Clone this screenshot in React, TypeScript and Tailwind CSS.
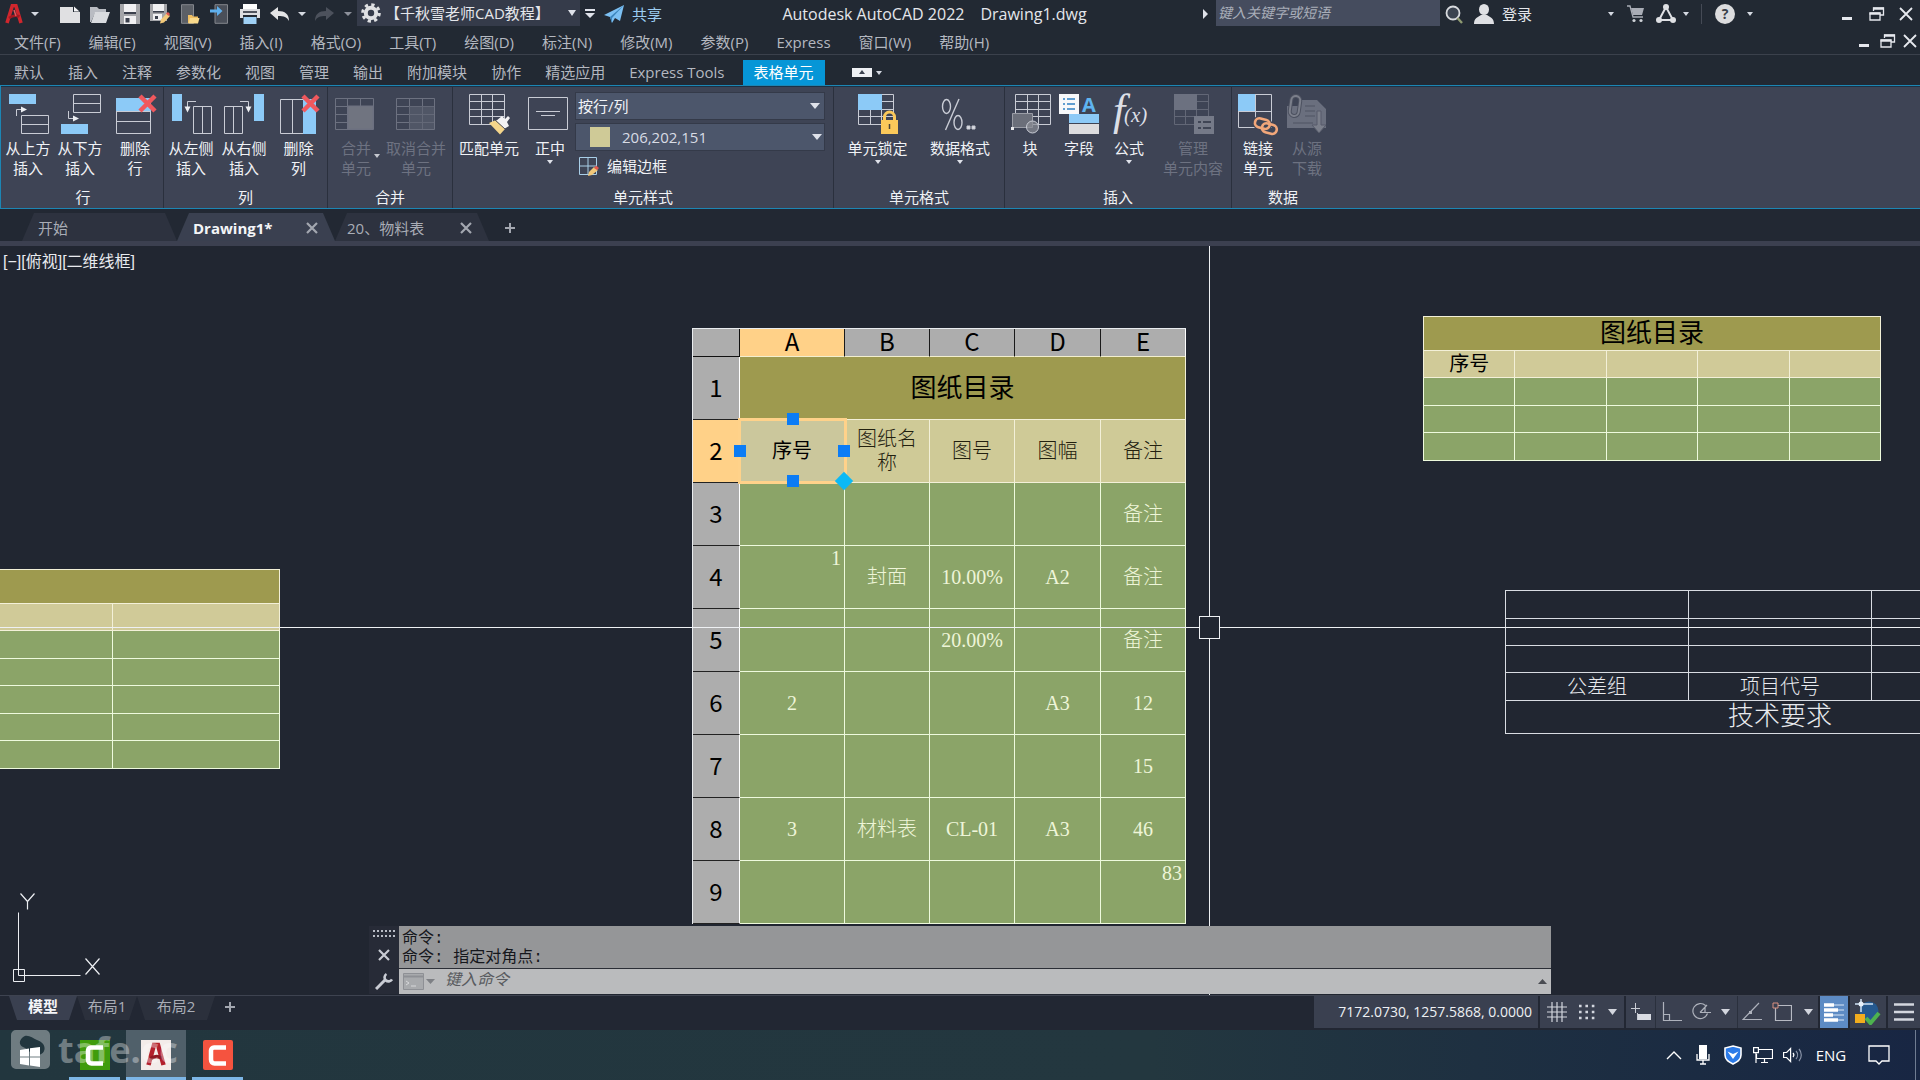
import React from 'react';

const UI_FONT = "font-['Open_Sans','Noto_Sans_CJK_SC',sans-serif]";
const CAD_FONT = "font-['Liberation_Serif','Noto_Sans_CJK_SC',serif]";
const HEAD_FONT = "font-['Noto_Sans_CJK_SC',sans-serif]";

/* ---------- small helpers ---------- */

const Caret: React.FC<{ className?: string }> = ({ className = 'w-2 h-1 text-[#d5d9e2]' }) => (
  <svg viewBox="0 0 10 5" preserveAspectRatio="none" className={`shrink-0 ${className}`} fill="currentColor">
    <path d="M0 0h10L5 5z" />
  </svg>
);

interface IconButtonProps {
  label: string;
  className?: string;
  children: React.ReactNode;
}

const IconButton: React.FC<IconButtonProps> = ({ label, className = 'w-[30px]', children }) => (
  <button type="button" aria-label={label} className={`h-full flex items-center justify-center shrink-0 ${className}`}>
    {children}
  </button>
);

const Svg20: React.FC<{ children: React.ReactNode }> = ({ children }) => (
  <svg viewBox="0 0 20 20" className="w-5 h-5 shrink-0" fill="none">
    {children}
  </svg>
);

/* ---------- title bar ---------- */

const RestoreIcon = () => (
  <svg viewBox="0 0 16 14" className="w-4 h-[14px]" fill="none" stroke="#e6e8ee" strokeWidth="1.3">
    <path d="M4.5 4V1h10v7h-3M1 6h10v7H1z" />
    <path d="M4 1.6h11M.5 6.6h11" strokeWidth="2.4" />
  </svg>
);

const CloseIcon = () => (
  <svg viewBox="0 0 14 14" className="w-[14px] h-[14px]" stroke="#e6e8ee" strokeWidth="1.8">
    <path d="M1 1l12 12M13 1L1 13" />
  </svg>
);

const MinimizeIcon = () => (
  <svg viewBox="0 0 10 14" className="w-[10px] h-[14px]" fill="#e6e8ee">
    <path d="M0 10h10v3H0z" />
  </svg>
);

const TitleBar = () => (
  <header className="h-[27px] flex items-center bg-[#222933] text-[#e4e6eb] text-[15px] leading-5 whitespace-nowrap">
    <IconButton label="应用程序菜单" className="w-[43px] gap-2">
      <svg viewBox="0 0 18 20" className="w-[18px] h-5" fill="none">
        <path d="M2 19L7.4 1.5h3.4L16 19" stroke="#d0262d" strokeWidth="3.6" />
        <path d="M4 14c4-3 7-3 10.5-1.500" stroke="#a11a22" strokeWidth="2.600" />
        <path d="M9 6l2 6" stroke="#e8555a" strokeWidth="1.500" />
      </svg>
      <Caret />
    </IconButton>
    <div className="w-3" />
    <IconButton label="新建">
      <Svg20>
        <path d="M0 3h13v5h7v11H0z" fill="#e0e0e2" />
        <path d="M14 2.500l5.500 5H14z" fill="#f5f5f6" />
      </Svg20>
    </IconButton>
    <IconButton label="打开">
      <Svg20>
        <path d="M0 3h7l2 2h7v4H5L1 18H0z" fill="#b9bcc3" />
        <path d="M5 8h15l-4 11H1z" fill="#d9dbdf" />
      </Svg20>
    </IconButton>
    <IconButton label="保存">
      <Svg20>
        <path d="M0 0h20v20H0z" fill="#a4a5a9" />
        <path d="M4 0h12v8H4zM4 12h12v8H4z" fill="#f0f0f2" />
        <path d="M4 8h12v2H4z" fill="#3a3f4c" />
        <path d="M5.500 14h4v4.500h-4z" fill="#3a3f4c" />
      </Svg20>
    </IconButton>
    <IconButton label="另存为">
      <Svg20>
        <path d="M0 0h17v17H0z" fill="#a4a5a9" />
        <path d="M3 0h11v7H3zM3 10h9v6H3z" fill="#f0f0f2" />
        <path d="M3 7h11v1.500H3zM5 12h3v3H5z" fill="#3a3f4c" />
        <path d="M10 19.500l1-4 6-6.500 3 3-6 6.500z" fill="#f2c879" />
        <path d="M16 9.500l2-1.500 2 2-1.500 2z" fill="#e0574f" />
      </Svg20>
    </IconButton>
    <IconButton label="从 Web 打开">
      <Svg20>
        <path d="M1.500.7h12v18.600h-12z" fill="#5b5f66" stroke="#83868c" />
        <path d="M8 19V11h4l1 1.500h5V19z" fill="#f0bf62" />
        <path d="M10 14h9.500L18 19.500H8.500z" fill="#f9d98b" />
      </Svg20>
    </IconButton>
    <IconButton label="保存到 Web">
      <Svg20>
        <path d="M5 .7h12.500v18.600H5z" fill="#4a4f59" stroke="#83868c" />
        <path d="M0 5.500h7V2l5.500 5L7 12V8.500H0z" fill="#5fb0ee" />
      </Svg20>
    </IconButton>
    <IconButton label="打印">
      <Svg20>
        <path d="M3 0h14v6H3z" fill="#fff" />
        <path d="M0 5h20v9h-3v-3H3v3H0z" fill="#dcdde0" />
        <path d="M3 7h14v2H3z" fill="#50545e" />
        <path d="M3.500 13h13v7h-13z" fill="#9fd0f5" />
      </Svg20>
    </IconButton>
    <IconButton label="放弃">
      <Svg20>
        <path d="M0 9l8-6v4c7 0 11 3 11 10-2-4-5-5-11-5v4z" fill="#e4e4e6" />
      </Svg20>
    </IconButton>
    <IconButton label="放弃列表" className="w-[14px]"><Caret /></IconButton>
    <IconButton label="重做">
      <Svg20>
        <path d="M20 9l-8-6v4C5 7 1 10 1 17c2-4 5-5 11-5v4z" fill="#4c515c" />
      </Svg20>
    </IconButton>
    <IconButton label="重做列表" className="w-[18px]"><Caret className="w-2 h-1 text-[#8d919b]" /></IconButton>
    <div className="w-[223px] h-[26px] self-start bg-[#353b4a] flex items-center justify-between px-1">
      <div className="flex items-center gap-1">
        <Svg20>
          <circle cx="10" cy="10" r="5.200" stroke="#dfe0e3" strokeWidth="4" />
          <circle cx="10" cy="10" r="8.300" stroke="#dfe0e3" strokeWidth="3" strokeDasharray="3.260 3.260" />
        </Svg20>
        <span>【千秋雪老师CAD教程】</span>
      </div>
      <Caret className="w-2 h-[6px] text-[#dfe2ea]" />
    </div>
    <IconButton label="自定义快速访问工具栏" className="w-5">
      <svg viewBox="0 0 10 10" className="w-[10px] h-[10px]" fill="#dfe2ea">
        <path d="M0 0h10v2H0zM0 4h10L5 9z" />
      </svg>
    </IconButton>
    <button type="button" className="flex items-center gap-2 ml-1 text-[#9ccdf2]">
      <Svg20>
        <path d="M0 11L20 1l-4 16-5-3-3 5-2-6z" fill="#7cc0f3" />
        <path d="M6 13L20 1 8 14v5z" fill="#3d86bd" />
      </Svg20>
      共享
    </button>

    <div className="flex-1 flex justify-center gap-4 pl-1 text-base">
      <span>Autodesk AutoCAD 2022</span>
      <span>Drawing1.dwg</span>
    </div>

    <svg viewBox="0 0 5 10" className="w-[5px] h-[10px] mr-2" fill="#dfe2ea"><path d="M0 0l5 5-5 5z" /></svg>
    <input
      aria-label="搜索"
      placeholder="键入关键字或短语"
      className="w-56 h-[26px] self-start bg-[#454c5e] px-[2px] pb-[2px] text-sm italic placeholder:text-[#a9aeb9] outline-none"
    />
    <IconButton label="搜索" className="w-7">
      <Svg20>
        <circle cx="9" cy="9" r="6.500" fill="#3b4350" stroke="#d8dade" strokeWidth="1.800" />
        <path d="M13.500 14l4.500 5" stroke="#8f9a72" strokeWidth="2.400" />
      </Svg20>
    </IconButton>
    <button type="button" className="flex items-center gap-2 pl-[6px] w-[131px]">
      <Svg20>
        <ellipse cx="10" cy="5.500" rx="5" ry="5.500" fill="#dfe0e4" />
        <path d="M0 20c0-6 4-7 7-9h6c3 2 7 3 7 9z" fill="#dfe0e4" />
      </Svg20>
      登录
    </button>
    <IconButton label="登录选项" className="w-6"><Caret className="w-[6px] h-1 text-[#d5d9e2]" /></IconButton>
    <IconButton label="应用商店" className="w-[26px]">
      <svg viewBox="0 0 18 18" className="w-[18px] h-[18px]" fill="none">
        <path d="M0 1h3l3 11h10" stroke="#a9adb6" strokeWidth="1.300" />
        <path d="M4 3h13l-2 7H6z" fill="#a9adb6" />
        <circle cx="7" cy="15.500" r="1.600" fill="#cfd2d8" />
        <circle cx="14" cy="15.500" r="1.600" fill="#cfd2d8" />
      </svg>
    </IconButton>
    <IconButton label="Autodesk 应用" className="w-[34px]">
      <Svg20>
        <path d="M10 3L3 16h14z" stroke="#dfe0e4" strokeWidth="2" />
        <circle cx="10" cy="3" r="3" fill="#dfe0e4" />
        <circle cx="3" cy="16" r="3" fill="#dfe0e4" />
        <circle cx="17" cy="16" r="3" fill="#dfe0e4" />
      </Svg20>
    </IconButton>
    <Caret className="w-[6px] h-1 text-[#d5d9e2]" />
    <div className="w-px h-5 bg-[#454a55] ml-3 mr-2" />
    <IconButton label="帮助">
      <span className="w-5 h-5 rounded-full bg-[#dcdcde] text-[#3a3f49] font-bold flex items-center justify-center text-sm">?</span>
    </IconButton>
    <IconButton label="帮助选项" className="w-5"><Caret className="w-[6px] h-1 text-[#d5d9e2]" /></IconButton>
    <div className="h-full flex items-center pl-[72px]">
      <IconButton label="最小化"><MinimizeIcon /></IconButton>
      <IconButton label="还原"><RestoreIcon /></IconButton>
      <IconButton label="关闭" className="w-7"><CloseIcon /></IconButton>
    </div>
  </header>
);

/* ---------- menu bar and ribbon tabs ---------- */

const MENUS = [
  '文件(F)', '编辑(E)', '视图(V)', '插入(I)', '格式(O)', '工具(T)', '绘图(D)',
  '标注(N)', '修改(M)', '参数(P)', 'Express', '窗口(W)', '帮助(H)',
];

const MenuBar = () => (
  <nav className="h-7 flex items-center justify-between border-b border-[#3b414c] bg-[#222933] text-[15px] leading-5 text-[#b4b8c0] whitespace-nowrap">
    <div className="flex gap-7 pl-[14px] pt-[2px]">
      {MENUS.map((m) => (
        <button type="button" key={m}>{m}</button>
      ))}
    </div>
    <div className="flex items-center">
      <IconButton label="最小化图形" className="w-6"><MinimizeIcon /></IconButton>
      <IconButton label="还原图形" className="w-6"><RestoreIcon /></IconButton>
      <IconButton label="关闭图形" className="w-5"><CloseIcon /></IconButton>
    </div>
  </nav>
);

const TABS = [
  '默认', '插入', '注释', '参数化', '视图', '管理', '输出', '附加模块', '协作', '精选应用', 'Express Tools',
];

const RibbonTabs = () => (
  <nav className="h-[30px] flex items-end pl-[2px] bg-[#222933] text-[15px] leading-5 text-[#b4b8c0] whitespace-nowrap">
    {TABS.map((t) => (
      <button type="button" key={t} className="h-[25px] px-3 pb-[2px]">{t}</button>
    ))}
    <button type="button" className="h-[25px] ml-[6px] px-[11px] pb-[2px] bg-[#0696d7] text-white">表格单元</button>
    <button type="button" aria-label="最小化功能区" className="h-[25px] ml-[27px] flex items-center gap-1">
      <svg viewBox="0 0 20 9" className="w-5 h-[9px]"><path d="M0 0h20v9H0z" fill="#eef0f4" /><path d="M7 6h6l-3-4z" fill="#3c4250" /></svg>
      <Caret className="w-[6px] h-1 text-[#d5d9e2]" />
    </button>
  </nav>
);

/* ---------- ribbon icons, all on a 44 x 40 box ---------- */

const Ico: React.FC<{ children: React.ReactNode }> = ({ children }) => (
  <svg viewBox="0 0 44 40" className="w-11 h-10 overflow-visible" fill="none" stroke="#c9ccd5" strokeWidth="1">
    {children}
  </svg>
);

const RedCross: React.FC<{ x: number }> = ({ x }) => (
  <path d={`M${x} 2l15 15M${x + 15} 2l-15 15`} stroke="#f0585d" strokeWidth="4.500" />
);

const Arrow: React.FC<{ line: string; head: string }> = ({ line, head }) => (
  <>
    <path d={line} />
    <path d={head} fill="#eceef2" stroke="none" />
  </>
);

const RowAboveIcon = () => (
  <Ico>
    <path d="M3 0h27v10H3z" fill="#8ccaf7" stroke="none" />
    <Arrow line="M10.500 22v-6.500h6" head="M15 12.500l6 3-6 3z" />
    <path d="M15.500 21.500h27v18h-27zM15.500 30.500h27" />
  </Ico>
);

const RowBelowIcon = () => (
  <Ico>
    <path d="M15.500.5h27v18h-27zM15.500 9.500h27" />
    <Arrow line="M10.500 17v7.500h6" head="M15 21.500l6 3-6 3z" />
    <path d="M3 30h27v10H3z" fill="#8ccaf7" stroke="none" />
  </Ico>
);

const RowDeleteIcon = () => (
  <Ico>
    <path d="M3 4h35v13H3z" fill="#8ccaf7" stroke="none" />
    <path d="M3.500 17v22.500h34V17M3.500 27.500h34M3 17.500h34" />
    <RedCross x={27} />
  </Ico>
);

const ColLeftIcon = () => (
  <Ico>
    <path d="M3 0h10v27H3z" fill="#8ccaf7" stroke="none" />
    <Arrow line="M27 7.500h-8.500v6" head="M15.500 12.500h6l-3 6z" />
    <path d="M24.500 12.500h18v27h-18zM33.500 12.500v27" />
  </Ico>
);

const ColRightIcon = () => (
  <Ico>
    <path d="M2.500 12.500h18v27h-18zM11.500 12.500v27" />
    <Arrow line="M18 7.500h8.500v6" head="M23.500 12.500h6l-3 6z" />
    <path d="M32 0h10v27H32z" fill="#8ccaf7" stroke="none" />
  </Ico>
);

const ColDeleteIcon = () => (
  <Ico>
    <path d="M26 5h13v35H26z" fill="#8ccaf7" stroke="none" />
    <path d="M26 5.500H3.500v34H26M15.500 5.500v34" />
    <RedCross x={26} />
  </Ico>
);

const MergeIcon = () => (
  <Ico>
    <g stroke="#6c7180">
      <path d="M1.500 4.500h38v31h-38zM13.500 4.500v31M26.500 4.500v8M1.500 12.500h12M1.500 20.500h12M1.500 28.500h12" />
      <path d="M14 12h25v23H14z" fill="#707480" />
    </g>
  </Ico>
);

const UnmergeIcon = () => (
  <Ico>
    <path d="M2.500 4.500h38v31h-38zM15.500 4.500v31M28.500 4.500v31M2.500 12.500h38M2.500 20.500h38M2.500 28.500h38" stroke="#6c7180" />
    <path d="M15 12h25v23H15z" fill="#5d6271" fillOpacity=".6" stroke="none" />
  </Ico>
);

const MatchIcon = () => (
  <Ico>
    <path d="M2.500.5h35v30h-35zM14.500.5v30M25.500.5v30M2.500 7.500h35M2.500 15.500h35M2.500 22.500h35" />
    <path d="M29 27l6-5 3 3 3-3 2 2-3 4 2 4-5 3z" fill="#f3f3f5" stroke="none" />
    <path d="M22 29l7-3 9 9-5 5.500z" fill="#f5d68b" stroke="none" />
    <path d="M28 26l10 9" stroke="#4a4f60" />
  </Ico>
);

const AlignIcon = () => (
  <Ico>
    <path d="M.5 3.500h39v32H.5zM8 17.500h24M13 21.500h14" />
  </Ico>
);

const LockIcon = () => (
  <Ico>
    <path d="M2.500.5h35v30h-35zM14.500 15v15M25.500.5v30M2.500 15.500h35M2.500 22.500h35M25.500 7.500h12" />
    <path d="M2 0h24v16H2z" fill="#8ccaf7" stroke="none" />
    <path d="M28.500 28v-5a5 5 0 0 1 10 0v5" stroke="#fbc95a" strokeWidth="3" />
    <path d="M25 26h17v14H25z" fill="#fbc95a" stroke="none" />
    <path d="M33.500 30v5" stroke="#4a4335" strokeWidth="1.500" />
  </Ico>
);

const FormatIcon = () => (
  <Ico>
    <g strokeWidth="1.400">
      <ellipse cx="8.500" cy="12.500" rx="4" ry="7" />
      <ellipse cx="20" cy="28.500" rx="4" ry="7" />
      <path d="M21 5L7.500 36" />
    </g>
    <path d="M29 32h3v3h-3zM34 32h3v3h-3z" fill="#d9dbe1" />
  </Ico>
);

const BlockIcon = () => (
  <Ico>
    <path d="M7.500.5h35v30h-35zM19.500.5v30M30.500.5v30M7.500 7.500h35M7.500 15.500h35M7.500 22.500h35" />
    <path d="M4.500 19.500h20v14h-20z" fill="#6b6f7a" stroke="#9a9da6" />
    <circle cx="24.500" cy="33" r="6" fill="#8a8d96" fillOpacity=".7" />
    <path d="M3 33h3v3H3z" fill="#e8e9ec" stroke="none" />
  </Ico>
);

const FieldIcon = () => (
  <Ico>
    <path d="M2 0h20v20H2z" fill="#f7f8fa" stroke="none" />
    <path d="M6 5h2M6 10h2M6 15h2M10 5h8M10 10h8M10 15h8" stroke="#2f80c3" strokeWidth="1.400" />
    <text x="25" y="18" fill="#5fb4f0" stroke="none" fontSize="20" fontWeight="700" fontFamily="Open Sans, sans-serif">A</text>
    <path d="M12 20h30v9H12z" fill="#8ccaf7" stroke="none" />
    <path d="M12 30h30v10H12z" fill="#dcdcde" stroke="none" />
  </Ico>
);

const FormulaIcon = () => (
  <Ico>
    <g fill="#dcdfe6" stroke="none" fontFamily="Liberation Serif, serif" fontStyle="italic">
      <text x="6" y="31" fontSize="44">f</text>
      <text x="17" y="28" fontSize="21">(x)</text>
    </g>
  </Ico>
);

const ManageIcon = () => (
  <Ico>
    <path d="M3.500.5h34v30h-34zM14.500 15v15M25.500.5v30M3.500 15.500h34M3.500 22.500h34M26 7.500h12" stroke="#626776" />
    <path d="M3 0h23v16H3z" fill="#6c7180" stroke="none" />
    <path d="M23 22h20v18H23z" fill="#757a88" stroke="none" />
    <path d="M27 28h3M27 34h3M32 28h8M32 34h8" stroke="#3f4555" strokeWidth="2" />
  </Ico>
);

const LinkIcon = () => (
  <Ico>
    <path d="M2.500.5h33v33h-33zM19.500.5v33M2.500 17.500h33" />
    <path d="M2 0h17v17H2z" fill="#8ccaf7" stroke="none" />
    <g stroke="#3f4555" strokeWidth="5">
      <rect x="19" y="25" width="15" height="9" rx="4.500" transform="rotate(15 26 29)" />
      <rect x="26" y="30" width="15" height="9" rx="4.500" transform="rotate(15 33 34)" />
    </g>
    <g stroke="#f2a77a" strokeWidth="2.600">
      <rect x="19" y="25" width="15" height="9" rx="4.500" transform="rotate(15 26 29)" />
      <rect x="26" y="30" width="15" height="9" rx="4.500" transform="rotate(15 33 34)" />
    </g>
  </Ico>
);

const DownloadIcon = () => (
  <Ico>
    <path d="M2 12h14V6h16l9 9v19H2z" fill="#6a6f7e" stroke="none" />
    <path d="M20 12h10M20 17h10M20 22h10M8 29h20" stroke="#585d6c" strokeWidth="1.500" />
    <rect x="5.500" y="2" width="9" height="20" rx="4.500" stroke="#4c5160" strokeWidth="4" transform="rotate(8 10 12)" />
    <rect x="5.500" y="2" width="9" height="20" rx="4.500" stroke="#7b7f8b" strokeWidth="2" transform="rotate(8 10 12)" />
    <path d="M32 17h4v14h5l-7 8-7-8h5z" fill="#7b7f8b" stroke="#565b6a" />
  </Ico>
);

/* ---------- ribbon ---------- */

interface ToolProps {
  icon: React.ReactNode;
  lines: string[];
  width: string;
  caret?: boolean;
  sideCaret?: boolean;
  disabled?: boolean;
}

const Tool: React.FC<ToolProps> = ({ icon, lines, width, caret, sideCaret, disabled }) => (
  <button
    type="button"
    disabled={disabled}
    className={`relative flex flex-col items-center shrink-0 pt-2 ${width} ${disabled ? 'text-[#6d7281]' : 'text-[#f0f2f6]'}`}
  >
    {icon}
    <span className="mt-1 flex flex-col items-center whitespace-nowrap">
      {lines.map((l) => (
        <span key={l}>{l}</span>
      ))}
    </span>
    {caret && <Caret className="w-[6px] h-1 mt-[2px] text-[#dfe2ea]" />}
    {sideCaret && <Caret className="absolute right-1 bottom-5 w-[6px] h-1 text-[#c5c8d0]" />}
  </button>
);

const Panel: React.FC<{ title: string; children: React.ReactNode }> = ({ title, children }) => (
  <section className="flex flex-col border-r border-[#2a303d]">
    <div className="h-[101px] flex items-start">{children}</div>
    <h2 className="h-5 text-center">{title}</h2>
  </section>
);

const Ribbon = () => (
  <div className="h-[124px] flex border-y border-l border-[#1c86b4] bg-[#3e4455] text-[15px] leading-5 text-[#f0f2f6] pl-[2px] shadow-[inset_0_1px_0_#1c3246]">
    <Panel title="行">
      <Tool icon={<RowAboveIcon />} lines={['从上方', '插入']} width="w-[50px]" />
      <Tool icon={<RowBelowIcon />} lines={['从下方', '插入']} width="w-[54px]" />
      <Tool icon={<RowDeleteIcon />} lines={['删除', '行']} width="w-[56px]" />
    </Panel>
    <Panel title="列">
      <Tool icon={<ColLeftIcon />} lines={['从左侧', '插入']} width="w-[54px]" />
      <Tool icon={<ColRightIcon />} lines={['从右侧', '插入']} width="w-[52px]" />
      <Tool icon={<ColDeleteIcon />} lines={['删除', '列']} width="w-[57px]" />
    </Panel>
    <Panel title="合并">
      <Tool icon={<MergeIcon />} lines={['合并', '单元']} width="w-[56px]" sideCaret disabled />
      <Tool icon={<UnmergeIcon />} lines={['取消合并', '单元']} width="w-[64px] mr-1" disabled />
    </Panel>
    <Panel title="单元样式">
      <Tool icon={<MatchIcon />} lines={['匹配单元']} width="w-[72px]" />
      <Tool icon={<AlignIcon />} lines={['正中']} width="w-[50px]" caret />
      <div className="w-[250px] mr-2 pt-[6px] flex flex-col gap-[3px]">
        <div className="h-7 flex items-center bg-[#4c566b] border border-[#343a49] pr-1">
          <select aria-label="表格单元样式" className="flex-1 appearance-none bg-transparent outline-none pl-[2px]">
            <option>按行/列</option>
          </select>
          <Caret className="w-[10px] h-[6px] text-[#dfe2ea]" />
        </div>
        <div className="h-7 flex items-center bg-[#4c566b] border border-[#343a49] pl-[14px] pr-[2px]">
          <span className="w-5 h-5 bg-[#cfca97] mr-3" />
          <select aria-label="表格单元背景色" className="flex-1 appearance-none bg-transparent outline-none text-[#d8dce5]">
            <option>206,202,151</option>
          </select>
          <Caret className="w-[10px] h-[6px] text-[#dfe2ea]" />
        </div>
        <button type="button" className="h-6 flex items-center gap-2 pl-1">
          <Svg20>
            <path d="M.5 1.500h17v17H.5zM9 1.500v17M.5 10h17" stroke="#a9cfe8" />
            <path d="M9 20l1-4 5-5 4 3-6 5z" fill="#f2c879" />
            <path d="M15 12l2-2.500 3 2.500-2 2z" fill="#e0574f" />
          </Svg20>
          编辑边框
        </button>
      </div>
    </Panel>
    <Panel title="单元格式">
      <Tool icon={<LockIcon />} lines={['单元锁定']} width="w-[87px]" caret />
      <Tool icon={<FormatIcon />} lines={['数据格式']} width="w-[78px] mr-[5px]" caret />
    </Panel>
    <Panel title="插入">
      <Tool icon={<BlockIcon />} lines={['块']} width="w-[50px]" />
      <Tool icon={<FieldIcon />} lines={['字段']} width="w-[48px]" />
      <Tool icon={<FormulaIcon />} lines={['公式']} width="w-[52px]" caret />
      <Tool icon={<ManageIcon />} lines={['管理', '单元内容']} width="w-[76px]" disabled />
    </Panel>
    <section className="flex flex-col">
      <div className="h-[101px] flex items-start">
        <Tool icon={<LinkIcon />} lines={['链接', '单元']} width="w-[52px]" />
        <Tool icon={<DownloadIcon />} lines={['从源', '下载']} width="w-[46px] mr-1" disabled />
      </div>
      <h2 className="h-5 text-center">数据</h2>
    </section>
  </div>
);

/* ---------- file tabs ---------- */

interface FileTabProps {
  name: string;
  className: string;
  closable?: boolean;
}

const FileTab: React.FC<FileTabProps> = ({ name, className, closable }) => (
  <div
    className={`h-7 flex items-center justify-between pr-[17px] pt-[2px] [clip-path:polygon(12px_0,calc(100%-12px)_0,100%_100%,0_100%)] ${className}`}
  >
    <button type="button">{name}</button>
    {closable && (
      <button type="button" aria-label={`关闭 ${name}`}>
        <svg viewBox="0 0 12 12" className="w-3 h-3" stroke="#a3a7b0" strokeWidth="2.200"><path d="M1 1l10 10M11 1L1 11" /></svg>
      </button>
    )}
  </div>
);

const PlusIcon = () => (
  <svg viewBox="0 0 12 12" className="w-[10px] h-[10px]" stroke="#a3a7b0" strokeWidth="2.400"><path d="M6 0v12M0 6h12" /></svg>
);

const FileTabs = () => (
  <nav className="h-[37px] flex items-end pl-[22px] border-b-[5px] border-[#3c4050] bg-[#222833] text-[15px] leading-5 text-[#a9adb6] whitespace-nowrap">
    <FileTab name="开始" className="w-[155px] pl-4 bg-[#2d323f]" />
    <FileTab name="Drawing1*" className="w-[158px] pl-4 bg-[#3a4050] text-[#f4f5f8] font-bold" closable />
    <FileTab name="20、物料表" className="w-[154px] pl-3 bg-[#2d323f]" closable />
    <button type="button" aria-label="新图形" className="w-[42px] h-7 pt-[2px] flex items-center justify-center"><PlusIcon /></button>
  </nav>
);

/* ---------- drawing area ---------- */

const COLUMNS = ['A', 'B', 'C', 'D', 'E'];

const ROWS = [
  ['', '', '', '', '备注'],
  ['1', '封面', '10.00%', 'A2', '备注'],
  ['', '', '20.00%', '', '备注'],
  ['2', '', '', 'A3', '12'],
  ['', '', '', '', '15'],
  ['3', '材料表', 'CL-01', 'A3', '46'],
  ['', '', '', '', '83'],
];

// cells whose text sits in the top right corner instead of the middle
const TOP_RIGHT = ['1', '83'];

const RowHead: React.FC<{ n: number }> = ({ n }) => (
  <th
    scope="row"
    className={`p-0 pb-[2px] font-normal text-black text-2xl leading-6 border-r border-b border-r-white border-b-[#222] ${HEAD_FONT} ${n === 2 ? 'bg-[#ffd188]' : 'bg-[#adadad]'}`}
  >
    {n}
  </th>
);

const MainTable = () => (
  <div className="absolute left-[692px] top-[82px]">
    <table className={`table-fixed border-separate border-spacing-0 w-[494px] border-t border-l border-[#e9ecef] text-xl leading-6 text-[#eef5d8] text-center ${CAD_FONT}`}>
      <colgroup>
        <col className="w-[47px]" />
        <col className="w-[105px]" />
        <col className="w-[85px]" />
        <col className="w-[85px]" />
        <col className="w-[86px]" />
        <col className="w-[85px]" />
      </colgroup>
      <thead>
        <tr className={`h-7 bg-[#adadad] text-black text-2xl leading-6 ${HEAD_FONT}`}>
          <td className="p-0 border-r border-b border-[#111]" />
          {COLUMNS.map((c) => (
            <th
              key={c}
              scope="col"
              className={`p-0 pb-[3px] font-normal border-r border-b border-b-[#f3efcf] border-r-[#1a1a1a] last:border-r-white ${c === 'A' ? 'bg-[#ffd188]' : ''}`}
            >
              {c}
            </th>
          ))}
        </tr>
      </thead>
      <tbody>
        <tr className="h-[63px]">
          <RowHead n={1} />
          <td colSpan={5} className="p-0 pt-[2px] bg-[#9e9a4f] text-black text-[26px] border-r border-b border-[#f3f0d8]">图纸目录</td>
        </tr>
        <tr className="h-[63px] bg-[#cfca97] text-[#22200f]">
          <RowHead n={2} />
          <td className="p-0 bg-[#cbc79c] text-black border-r border-b border-[#f3f0d8]">序号</td>
          <td className="px-2 py-0 font-light border-r border-b border-[#f3f0d8]">图纸名称</td>
          <td className="p-0 font-light border-r border-b border-[#f3f0d8]">图号</td>
          <td className="p-0 font-light border-r border-b border-[#f3f0d8]">图幅</td>
          <td className="p-0 font-light border-r border-b border-[#f3f0d8]">备注</td>
        </tr>
        {ROWS.map((row, r) => (
          <tr key={r} className="h-[63px] bg-[#8ba468]">
            <RowHead n={r + 3} />
            {row.map((cell, c) => (
              <td
                key={c}
                className={`py-0 px-[3px] font-light border-r border-b border-[#eefadd] ${TOP_RIGHT.includes(cell) ? 'align-top text-right' : ''}`}
              >
                {cell}
              </td>
            ))}
          </tr>
        ))}
      </tbody>
    </table>
    {/* selection frame with its grips */}
    <div className="absolute left-[46px] top-[90px] w-[109px] h-[66px] border-[3px] border-[#ffd28a]">
      <span className="absolute left-1/2 -top-[2px] w-3 h-3 -translate-1/2 bg-[#0b7cf5]" />
      <span className="absolute left-1/2 top-full w-3 h-3 -translate-1/2 bg-[#0b7cf5]" />
      <span className="absolute -left-px top-1/2 w-3 h-3 -translate-1/2 bg-[#0b7cf5]" />
      <span className="absolute left-full top-1/2 w-3 h-3 -translate-1/2 bg-[#0b7cf5]" />
      <span className="absolute left-full top-full w-[13px] h-[13px] -translate-1/2 rotate-45 bg-[#0cb9f5]" />
    </div>
  </div>
);

const SmallTable = () => (
  <table className={`absolute left-[1423px] top-[70px] w-[458px] table-fixed border-collapse text-black text-xl leading-6 text-center ${CAD_FONT}`}>
    <tbody>
      <tr className="h-[34px] bg-[#9e9a4f] text-[26px]">
        <td colSpan={5} className="p-0 border border-[#f3f0d8]">图纸目录</td>
      </tr>
      <tr className="h-[27px] bg-[#d0ca98]">
        {['序号', '', '', '', ''].map((t, i) => (
          <td key={i} className="p-0 border border-[#f3f0d8]">{t}</td>
        ))}
      </tr>
      {[0, 1, 2].map((r) => (
        <tr key={r} className={`bg-[#8ba468] ${r % 2 ? 'h-[27px]' : 'h-7'}`}>
          {COLUMNS.map((c) => (
            <td key={c} className="p-0 border border-[#eefadd]" />
          ))}
        </tr>
      ))}
    </tbody>
  </table>
);

const LeftTable = () => (
  <table className="absolute -left-[56px] top-[323px] w-[336px] table-fixed border-collapse">
    <tbody>
      <tr className="h-[34px] bg-[#9e9a4f]">
        <td colSpan={2} className="p-0 border border-[#f3f0d8]" />
      </tr>
      <tr className="h-[27px] bg-[#d0ca98]">
        <td className="p-0 border border-[#f3f0d8]" />
        <td className="p-0 border border-[#f3f0d8]" />
      </tr>
      {[0, 1, 2, 3, 4].map((r) => (
        <tr key={r} className={`bg-[#8ba468] ${r % 2 ? 'h-[27px]' : 'h-7'}`}>
          <td className="p-0 border border-[#eefadd]" />
          <td className="p-0 border border-[#eefadd]" />
        </tr>
      ))}
    </tbody>
  </table>
);

const SpecTable = () => (
  <table className={`absolute left-[1505px] top-[344px] w-[550px] table-fixed border-collapse text-[#e8eaee] text-xl leading-6 font-light text-center ${CAD_FONT}`}>
    <tbody>
      {[0, 1, 2].map((r) => (
        <tr key={r} className={r === 0 ? 'h-7' : 'h-[27px]'}>
          {[0, 1, 2].map((c) => (
            <td key={c} className="p-0 border border-[#d9dce2]" />
          ))}
        </tr>
      ))}
      <tr className="h-7">
        <td className="p-0 border border-[#d9dce2]">公差组</td>
        <td className="p-0 border border-[#d9dce2]">项目代号</td>
        <td className="p-0 border border-[#d9dce2]" />
      </tr>
      <tr className="h-[33px] text-[26px]">
        <td colSpan={3} className="p-0 border border-[#d9dce2]">技术要求</td>
      </tr>
    </tbody>
  </table>
);

const Crosshair = () => (
  <>
    <div className="absolute left-0 top-[381px] w-[1199px] h-px bg-[#eef0f3]" />
    <div className="absolute left-[1219px] right-0 top-[381px] h-px bg-[#eef0f3]" />
    <div className="absolute left-[1209px] top-0 h-[370px] w-px bg-[#eef0f3]" />
    <div className="absolute left-[1209px] top-[392px] bottom-0 w-px bg-[#eef0f3]" />
    <div className="absolute left-[1199px] top-[370px] w-[21px] h-[23px] border border-[#eef0f3]" />
  </>
);

const UcsIcon = () => (
  <svg viewBox="0 0 110 100" className="absolute left-0 bottom-[2px] w-[110px] h-[100px]" fill="none" stroke="#eceef2">
    <path d="M18.500 19.500v63h62" />
    <path d="M13.500 76.500h11v12h-11z" />
    <path d="M20.500.5l7 8 7-8M27.500 8.500v8M85.500 65.500l14 16M99.500 65.500l-14 16" strokeWidth="1.200" />
  </svg>
);

const CommandLine = () => (
  <div className="absolute left-[369px] right-[369px] bottom-px flex text-base leading-[19px]">
    <div className="w-[30px] bg-[#272b37] flex flex-col items-center justify-between py-1">
      <svg viewBox="0 0 22 7" className="w-[22px] h-[7px]" stroke="#b9bdc6" strokeWidth="2" strokeDasharray="2 2">
        <path d="M0 1h22M0 6h22" />
      </svg>
      <button type="button" aria-label="关闭命令行">
        <svg viewBox="0 0 12 12" className="w-3 h-3" stroke="#c9ccd4" strokeWidth="2.200"><path d="M1 1l10 10M11 1L1 11" /></svg>
      </button>
      <button type="button" aria-label="自定义">
        <svg viewBox="0 0 18 18" className="w-[18px] h-[18px]" fill="none" stroke="#c9ccd4">
          <path d="M1 17l9-9" strokeWidth="3" />
          <path d="M11.500 2a4 4 0 1 0 5.500 5.500" strokeWidth="2.600" />
        </svg>
      </button>
    </div>
    <div className="flex-1 font-['Liberation_Mono','Noto_Sans_CJK_SC',monospace] text-[#15171c]">
      <div className="bg-[#959698] pl-[3px] pt-1">
        <p>命令:</p>
        <p>命令: 指定对角点:</p>
      </div>
      <div className="h-[26px] flex items-center bg-[#babbbd] border-t border-[#2b2e36] px-1">
        <svg viewBox="0 0 22 17" className="w-[22px] h-[17px]" fill="none" stroke="#8e9095">
          <path d="M.5.500h20v16H.5z" fill="#a8aaad" />
          <path d="M.5 3.500h20" strokeWidth="2" />
          <path d="M3 8l3 2-3 2M8 13h5" stroke="#d7d8da" />
        </svg>
        <Caret className="w-[9px] h-[5px] ml-px text-[#7e8085]" />
        <input
          aria-label="键入命令"
          placeholder="键入命令"
          className="flex-1 ml-[10px] italic bg-transparent outline-none placeholder:text-[#595b60]"
        />
        <Caret className="w-[9px] h-[5px] rotate-180 text-[#4a4c52]" />
      </div>
    </div>
  </div>
);

const Canvas = () => (
  <main className="relative flex-1 min-h-[749px] overflow-hidden bg-[#212631]">
    <p className="absolute left-[3px] top-1 text-base leading-6 text-[#e8eaee] font-['Liberation_Sans','Noto_Sans_CJK_SC',sans-serif]">
      [−][俯视][二维线框]
    </p>
    <LeftTable />
    <MainTable />
    <SmallTable />
    <SpecTable />
    <Crosshair />
    <UcsIcon />
    <CommandLine />
  </main>
);

/* ---------- status bar ---------- */

const LayoutTab: React.FC<{ name: string; className: string }> = ({ name, className }) => (
  <button type="button" className={`h-6 pb-1 [clip-path:polygon(0_0,100%_0,calc(100%-8px)_100%,8px_100%)] ${className}`}>
    {name}
  </button>
);

const StatusBar = () => (
  <div className="h-[35px] flex items-start justify-between border-t border-[#3e4350] bg-[#222733] text-[15px] leading-5 text-[#a9adb6] whitespace-nowrap">
    <div className="flex pl-[9px]">
      <LayoutTab name="模型" className="w-[68px] bg-[#3a4050] text-[#f4f5f8] font-bold" />
      <LayoutTab name="布局1" className="w-[60px] bg-[#2b303c]" />
      <LayoutTab name="布局2" className="w-[78px] bg-[#2b303c]" />
      <button type="button" aria-label="新建布局" className="w-[30px] h-6 pb-[2px] flex items-center justify-center"><PlusIcon /></button>
    </div>
    <div className="flex h-8 gap-[2px]">
      <div className="w-56 bg-[#3a4050] text-[#eef0f4] text-sm pr-[6px] flex items-center justify-end">7172.0730, 1257.5868, 0.0000</div>
      <div className="flex bg-[#3a4050]">
        <IconButton label="栅格" className="w-[34px]">
          <svg viewBox="0 0 20 20" className="w-5 h-5" stroke="#d3d6de" strokeWidth="1.200"><path d="M5 0v20M10 0v20M15 0v20M0 5h20M0 10h20M0 15h20" /></svg>
        </IconButton>
        <IconButton label="捕捉" className="w-[26px]">
          <svg viewBox="0 0 16 16" className="w-4 h-4" stroke="#d3d6de" strokeWidth="2.600" strokeDasharray="2.600 3.800"><path d="M0 2h16M0 8h16M0 14h16" /></svg>
        </IconButton>
        <IconButton label="捕捉选项" className="w-6"><Caret className="w-[9px] h-[6px] text-[#d3d6de]" /></IconButton>
      </div>
      <div className="flex bg-[#3a4050]">
        <IconButton label="动态输入" className="w-[30px] border-r border-[#2a303d]">
          <Svg20>
            <path d="M4.500 1v10M0 6.500h9M6.500 11v7" stroke="#c9ccd4" />
            <path d="M7 12h13v6H7z" fill="#d8dbe2" />
          </Svg20>
        </IconButton>
        <IconButton label="正交" className="w-8">
          <Svg20><path d="M1.500 0v18.500H20M1.500 12.500h6v6" stroke="#aeb2bc" strokeWidth="1.200" /></Svg20>
        </IconButton>
        <IconButton label="极轴追踪" className="w-[26px]">
          <Svg20>
            <path d="M14.500 3.500a7.500 7.500 0 1 0 2 8M9 10.500h11M9 10.500L16 3M14 5v5" stroke="#aeb2bc" strokeWidth="1.200" />
          </Svg20>
        </IconButton>
        <IconButton label="极轴选项" className="w-6 border-r border-[#2a303d]"><Caret className="w-[9px] h-[6px] text-[#d3d6de]" /></IconButton>
        <IconButton label="对象捕捉追踪" className="w-[28px]">
          <Svg20>
            <path d="M17 1L1 17.500h19" stroke="#aeb2bc" strokeWidth="1.200" />
            <path d="M7 9h3v3H7z" fill="#aeb2bc" />
          </Svg20>
        </IconButton>
        <IconButton label="对象捕捉" className="w-[32px]">
          <Svg20>
            <path d="M3.500 3.500h16v15h-16z" stroke="#b7bac3" strokeWidth="1.200" />
            <path d="M1 1h5v5H1z" fill="#3a4050" stroke="#d99080" />
          </Svg20>
        </IconButton>
        <IconButton label="对象捕捉选项" className="w-5"><Caret className="w-[9px] h-[6px] text-[#d3d6de]" /></IconButton>
      </div>
      <IconButton label="线宽" className="w-[28px] bg-[#5d8bc4]">
        <Svg20>
          <path d="M0 3h20M0 8h20M0 13h20M0 18h20" stroke="#dbe7f6" />
          <path d="M0 3h10M0 8h14M0 13h9M0 18h14" stroke="#fff" strokeWidth="3.500" />
        </Svg20>
      </IconButton>
      <IconButton label="注释监视器" className="w-9 bg-[#3a4050]">
        <svg viewBox="0 0 26 26" className="w-[26px] h-[26px]" fill="none">
          <circle cx="14" cy="12" r="9.500" fill="#25598f" />
          <path d="M0 15h10v9H0z" fill="#f2ad1e" />
          <path d="M6 0v13M0 5h18" stroke="#cfe2f5" strokeWidth="1.500" />
          <circle cx="6" cy="5" r="2.500" fill="#e7f1fb" />
          <path d="M11 19l4.500 5L24 14" stroke="#4db24f" strokeWidth="4" />
        </svg>
      </IconButton>
      <IconButton label="自定义状态栏" className="w-[32px] bg-[#3a4050]">
        <svg viewBox="0 0 20 18" className="w-5 h-[18px]" stroke="#d3d6de" strokeWidth="2.400"><path d="M0 1.500h20M0 9h20M0 16.500h20" /></svg>
      </IconButton>
    </div>
  </div>
);

/* ---------- windows taskbar ---------- */

const TaskButton: React.FC<{ label: string; className: string; children: React.ReactNode }> = ({ label, className, children }) => (
  <button type="button" aria-label={label} className={`h-full flex items-center justify-center border-b-[3px] border-[#7db6e6] pb-px pt-1 ${className}`}>
    {children}
  </button>
);

const CamtasiaC = () => (
  <path d="M23 7.500H11c-2 0-3 1.500-3 3v9c0 2.500 1.500 4 3.500 4H23" stroke="#fff" strokeWidth="4.500" fill="none" />
);

const Taskbar = () => (
  <footer className="h-[50px] flex justify-between bg-linear-to-r from-[#22363e] via-[#23373f] via-60% to-[#182643] text-white">
    <div className="relative flex">
      <button type="button" aria-label="开始" className="w-[69px] flex items-center justify-center pr-[9px] pt-1">
        <svg viewBox="0 0 20 20" className="w-5 h-5" fill="#fff">
          <path d="M0 3l9-1.500V9.500H0zM10 1.300L20 0v9.500H10zM0 10.500h9v8L0 17zM10 10.500h10V20l-10-1.400z" />
        </svg>
      </button>
      <TaskButton label="Camtasia" className="w-[51px] mr-[6px]">
        <svg viewBox="0 0 30 30" className="w-[30px] h-[30px]"><path d="M0 0h30v30H0z" fill="#3f9c0c" /><CamtasiaC /></svg>
      </TaskButton>
      <TaskButton label="AutoCAD" className="w-[60px] mr-[6px] bg-[#50606a]">
        <svg viewBox="0 0 30 30" className="w-[30px] h-[30px]" fill="none">
          <path d="M0 0h30v30H0z" fill="#f3ece9" />
          <path d="M7.500 25L13 5h4l5.500 20" stroke="#b3202c" strokeWidth="4.500" />
          <path d="M9 19c4-3 8-3 12-1" stroke="#8f1822" strokeWidth="3.500" />
        </svg>
      </TaskButton>
      <TaskButton label="Camtasia 录制器" className="w-[51px]">
        <svg viewBox="0 0 30 30" className="w-[30px] h-[30px]"><rect width="30" height="30" rx="2" fill="#f5533f" /><CamtasiaC /></svg>
      </TaskButton>
      {/* translucent site mark lying over the taskbar */}
      <div className="absolute left-[11px] top-0 flex items-center opacity-35 pointer-events-none">
        <svg viewBox="0 0 39 39" className="w-[39px] h-[39px]">
          <path fillRule="evenodd" d="M5 0h29a5 5 0 0 1 5 5v29a5 5 0 0 1-5 5H5a5 5 0 0 1-5-5V5a5 5 0 0 1 5-5zM11 8c5-5 10 0 15 2 10 3 10 14 1 15-8 0-9-6-15-8-4-2-4-6-1-9z" fill="#fff" />
        </svg>
        <span className="ml-2 text-[36px] leading-[39px] font-bold font-['Open_Sans',sans-serif]">tafe.cc</span>
      </div>
    </div>
    <div className="flex items-center text-[15px]">
      <IconButton label="显示隐藏的图标" className="w-[29px]">
        <svg viewBox="0 0 16 9" className="w-4 h-[9px]" fill="none" stroke="#fff" strokeWidth="1.400"><path d="M1 8l7-7 7 7" /></svg>
      </IconButton>
      <IconButton label="麦克风">
        <svg viewBox="0 0 14 20" className="w-[14px] h-5" fill="none" stroke="#fff" strokeWidth="1.300">
          <rect x="3" y="0" width="8" height="14" fill="#fff" stroke="none" />
          <path d="M1 9v6h12V9M7 15v4M4 19h6" />
        </svg>
      </IconButton>
      <IconButton label="安全中心">
        <svg viewBox="0 0 20 20" className="w-5 h-5" fill="none">
          <path d="M10 1l8 2v7c0 5-4 7-8 9-4-2-8-4-8-9V3z" fill="#2c7be8" stroke="#fff" strokeWidth="1.600" />
          <path d="M4.500 6.500L10 9l5.500-2.500L10 14z" fill="#fff" />
        </svg>
      </IconButton>
      <IconButton label="网络">
        <svg viewBox="0 0 20 18" className="w-5 h-[18px]" fill="none" stroke="#fff" strokeWidth="1.200">
          <path d="M5.500 3.500h14v9h-16V8M8 16.500h7M11.500 13v3.500M.6 1.600h4.800v5H.6zM3 7v10" />
        </svg>
      </IconButton>
      <IconButton label="音量">
        <svg viewBox="0 0 20 16" className="w-5 h-4" fill="none" stroke="#fff" strokeWidth="1.200">
          <path d="M.6 5.500h3l4-4v13l-4-4h-3zM10 6a3 3 0 0 1 0 4" />
          <path d="M13 4a6 6 0 0 1 0 8M16 2a9 9 0 0 1 0 12" stroke="#8a94a8" />
        </svg>
      </IconButton>
      <button type="button" className="w-[46px] text-center">ENG</button>
      <IconButton label="通知" className="w-[50px]">
        <svg viewBox="0 0 22 20" className="w-[22px] h-5" fill="none" stroke="#fff" strokeWidth="1.300"><path d="M1 1h20v15h-7l-3 3-3-3H1z" /></svg>
      </IconButton>
      <div className="h-full w-3 border-r border-[#6f7c92]" />
      <div className="w-1" />
    </div>
  </footer>
);

const App: React.FC = () => (
  <div className={`min-h-screen flex flex-col bg-[#212631] ${UI_FONT}`}>
    <TitleBar />
    <MenuBar />
    <RibbonTabs />
    <Ribbon />
    <FileTabs />
    <Canvas />
    <StatusBar />
    <Taskbar />
  </div>
);

export default App;
